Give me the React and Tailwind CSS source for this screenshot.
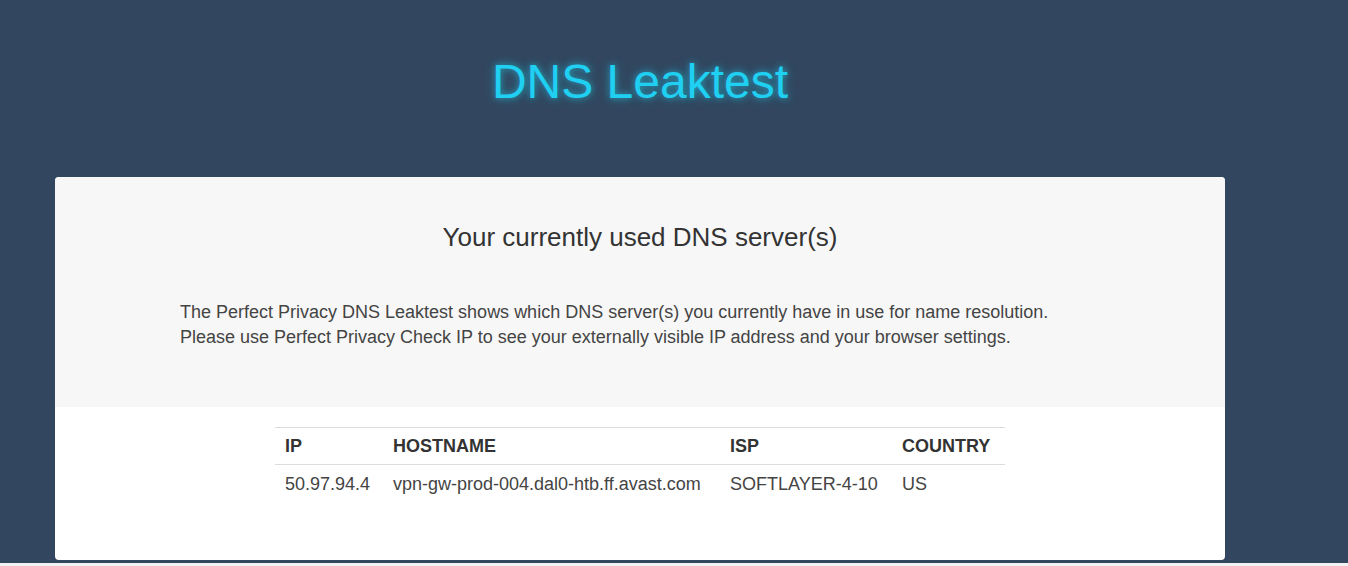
import React from 'react';

const servers = [
  { ip: '50.97.94.4', host: 'vpn-gw-prod-004.dal0-htb.ff.avast.com', isp: 'SOFTLAYER-4-10', country: 'US' },
];

export default function App() {
  return (
    <div className="min-h-[566px] bg-[#32475f] font-['Liberation_Sans',Arial,sans-serif] flex flex-col">
      {/* Header */}
      <div className="w-[1170px] ml-[55px] h-[177px] flex items-start justify-center pt-[52px]">
        <h1 className="text-[48px] leading-[60px] text-[#1fd0f2] [text-shadow:0_0_6px_rgba(31,208,242,0.55),0_0_12px_rgba(31,208,242,0.35)]">
          DNS Leaktest
        </h1>
      </div>

      {/* Card */}
      <div className="w-[1170px] ml-[55px] bg-white rounded-[4px] overflow-hidden h-[383px] flex flex-col">
        <div className="bg-[#f7f7f7] h-[230px] flex flex-col">
          <h2 className="text-center text-[26px] leading-[32px] text-[#333] mt-[44px]">
            Your currently used DNS server(s)
          </h2>
          <p className="ml-[125px] mt-[47px] text-[18px] leading-[25px] text-[#444]">
            The Perfect Privacy DNS Leaktest shows which DNS server(s) you currently have in use for name resolution.
            <br />
            Please use Perfect Privacy Check IP to see your externally visible IP address and your browser settings.
          </p>
        </div>

        <div className="flex justify-center pt-[20px]">
          <table className="w-[730px] text-[18px] text-[#333] border-collapse">
            <thead>
              <tr className="border-t border-b border-[#dddddd]">
                <th className="text-left font-bold uppercase w-[108px] pl-[10px] h-[37px]">IP</th>
                <th className="text-left font-bold uppercase w-[337px] pl-[10px]">Hostname</th>
                <th className="text-left font-bold uppercase w-[172px] pl-[10px]">ISP</th>
                <th className="text-left font-bold uppercase pl-[10px]">Country</th>
              </tr>
            </thead>
            <tbody>
              {servers.map((s) => (
                <tr key={s.ip}>
                  <td className="pl-[10px] h-[40px] text-[#444]">{s.ip}</td>
                  <td className="pl-[10px] text-[#444]">{s.host}</td>
                  <td className="pl-[10px] text-[#444]">{s.isp}</td>
                  <td className="pl-[10px] text-[#444]">{s.country}</td>
                </tr>
              ))}
            </tbody>
          </table>
        </div>
      </div>

      <div className="h-[3px]" />
      <div className="flex-1 bg-[#f2f2f2]" />
    </div>
  );
}
